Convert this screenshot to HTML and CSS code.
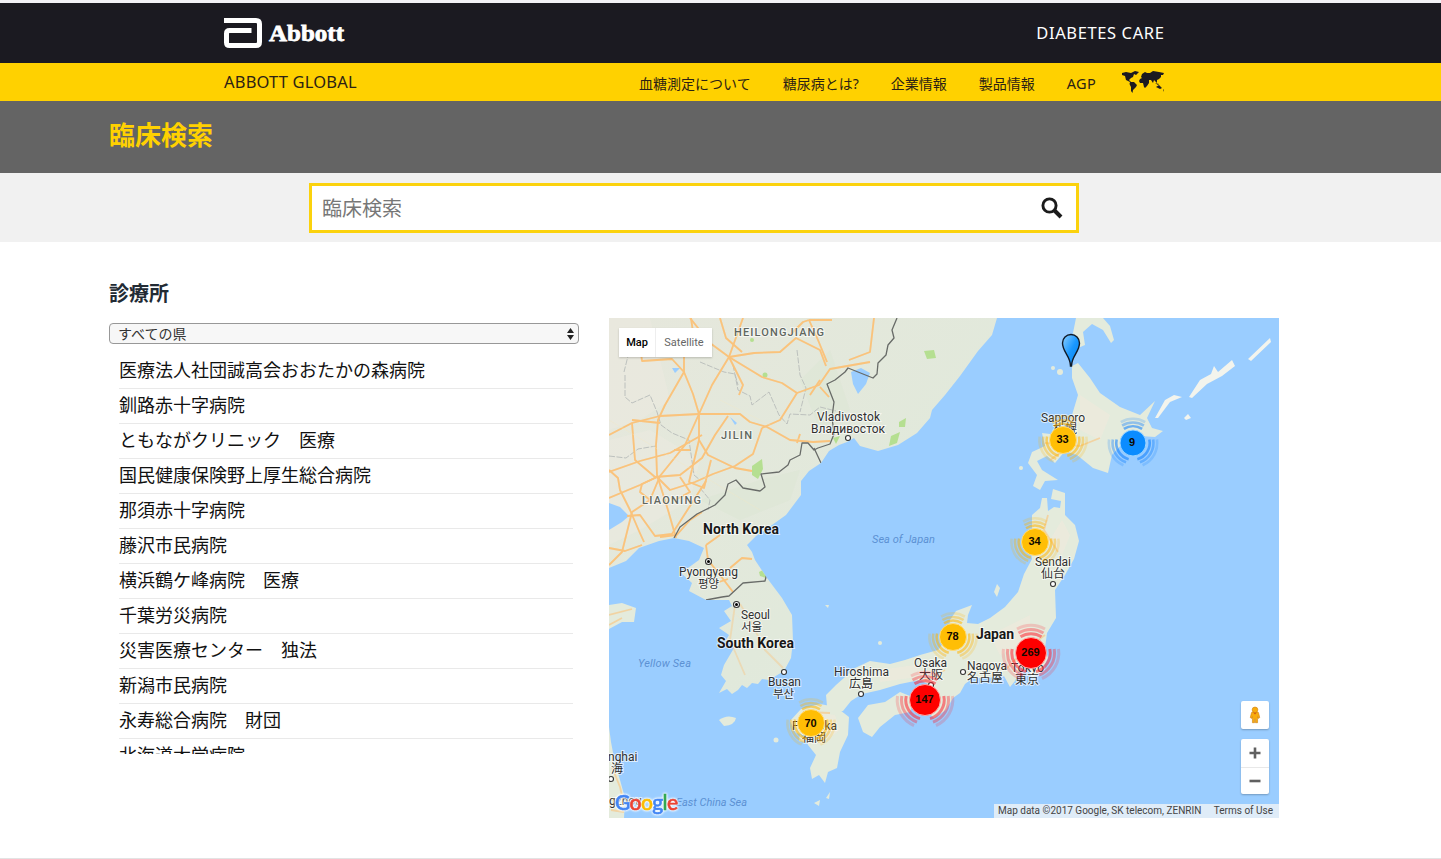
FILE: index.html
```html
<!DOCTYPE html>
<html lang="ja">
<head>
<meta charset="utf-8">
<title>臨床検索</title>
<link rel="stylesheet" href="styles.css">
</head>
<body>
<header class="topbar">
  <div class="narrow">
    <a class="logo" aria-label="Abbott">
      <svg class="logo-mark" width="38" height="30" viewBox="0 0 38 30"><path d="M0 2.500H32Q35.500 2.500 35.500 6V24Q35.500 27.500 32 27.500H5.500Q2.500 27.500 2.500 24.500V15.500Q2.500 12.500 5.500 12.500H27.500" fill="none" stroke="#fff" stroke-width="5"/></svg>
      <svg width="78" height="26" viewBox="0 0 78 26"><text class="logo-word" x="1" y="21" textLength="75" lengthAdjust="spacingAndGlyphs">Abbott</text></svg>
    </a>
    <span class="division">DIABETES CARE</span>
  </div>
</header>
<nav class="yellowbar">
  <div class="narrow">
    <a class="global">ABBOTT GLOBAL</a>
    <div class="menu">
      <a>血糖測定について</a><a>糖尿病とは?</a><a>企業情報</a><a>製品情報</a><a class="agp">AGP</a>
      <svg class="world" width="42" height="22" viewBox="0 0 42 22" fill="#1c1a20"><path d="M0 2L4 1 9 2 13 0 17 1 14 4 12 3 11 6 9 7 7 9 9 11 12 11 15 14 14 16 11 19 10.500 22 9 20 9 16 7.500 13 8 11 4 9 3 5 0 4Z"/><path d="M20 3L23 1 25 2 28 2 31 0 37 1 42 2 41 4 39 4 39 6 37 8 35 9 35 12 32 9 31 12 29 9 27 9 27 12 25 15 23 17 22 16 21 12 18 12 17 10 18 8 20 7 19 6Z"/><path d="M34 16L37 14 40 17 38 18ZM33 12L37 13 36 14ZM41 19L42 18 41 21Z"/></svg>
    </div>
  </div>
</nav>
<div class="titlebar"><div class="wide"><h1>臨床検索</h1></div></div>
<div class="searchbar">
  <form class="search">
    <input type="text" placeholder="臨床検索" aria-label="臨床検索">
    <svg width="22" height="22" viewBox="0 0 22 22" fill="none" stroke="#1b1b1b"><circle cx="8.500" cy="8.500" r="6.600" stroke-width="2.900"/><path d="M13 13L20 20" stroke-width="4"/></svg>
  </form>
</div>
<main class="content">
  <section class="clinics">
    <h2>診療所</h2>
    <div class="select"><span>すべての県</span><svg width="7" height="12" viewBox="0 0 7 12" fill="#222"><path d="M0 5L3.500 0 7 5ZM0 7H7L3.500 12Z"/></svg></div>
    <ul class="list">
      <li>医療法人社団誠高会おおたかの森病院</li>
      <li>釧路赤十字病院</li>
      <li>ともながクリニック　医療</li>
      <li>国民健康保険野上厚生総合病院</li>
      <li>那須赤十字病院</li>
      <li>藤沢市民病院</li>
      <li>横浜鶴ケ峰病院　医療</li>
      <li>千葉労災病院</li>
      <li>災害医療センター　独法</li>
      <li>新潟市民病院</li>
      <li>永寿総合病院　財団</li>
      <li>北海道大学病院</li>
    </ul>
  </section>
  <section class="map">
    <svg class="canvas" width="670" height="500" viewBox="609 318 670 500">
      <defs>
        <clipPath id="mainland"><path d="M609 318H997L992 335 978 351 960 376 945 395 932 410 930 418 917 433 898 445 878 451 860 446 854 438 847 442 839 445 829 451 821 463 809 471 801 481 801 495 786 515 772 525 756 536 747 545 752 552 755 560 767 578 782 598 792 615 793 641 791 658 784 671 769 680 762 679 758 684 752 683 747 688 742 685 738 690 732 694 727 689 719 693 726 681 721 675 724 665 734 648 726 640 729 635 719 628 731 621 724 611 732 606 729 600 706 600 689 591 692 583 681 573 699 560 704 548 689 541 674 538 659 541 639 548 626 561 609 568Z"/></clipPath>
        <linearGradient id="pin" x1="0" y1="0" x2="1" y2="1"><stop offset="0" stop-color="#8fd0ff"/><stop offset=".5" stop-color="#1a98ff"/><stop offset="1" stop-color="#0080f0"/></linearGradient>
        <linearGradient id="terrain" x1="0" y1="0" x2="1" y2="1"><stop offset="0" stop-color="#e6e7dc"/><stop offset=".6" stop-color="#e1e9db"/><stop offset="1" stop-color="#e5eade"/></linearGradient>
        <g id="rings" fill="none" stroke-width="3">
          <g stroke-opacity=".55"><path d="M-10.500 -16.200A19.300 19.300 0 0 1 10.500 -16.200"/><path d="M18.800 -4A19.300 19.300 0 0 1 5 18.600"/><path d="M-18.800 -4A19.300 19.300 0 0 0 -5 18.600"/></g>
          <g stroke-opacity=".38"><path d="M-12.500 -20A23.600 23.600 0 0 1 12.500 -20"/><path d="M23.200 -4A23.600 23.600 0 0 1 8 22.200"/><path d="M-23.200 -4A23.600 23.600 0 0 0 -8 22.200"/></g>
          <g stroke-opacity=".2"><path d="M-14 -24A27.800 27.800 0 0 1 14 -24"/><path d="M27.500 -4A27.800 27.800 0 0 1 11 25.500"/><path d="M-27.500 -4A27.800 27.800 0 0 0 -11 25.500"/></g>
        </g>
      </defs>
      <rect x="609" y="318" width="670" height="500" fill="#9acdff"/>

      <!-- mainland with roads, parks and lakes -->
      <g clip-path="url(#mainland)">
        <rect x="609" y="318" width="400" height="400" fill="url(#terrain)"/>
        <path d="M609 440L650 430 700 460 690 500 640 530 609 545ZM609 318H650L670 400 640 420 609 430Z" fill="#ebe9df" opacity=".6"/>
        <path d="M700 500L760 480 800 470 790 500 740 520ZM830 350L850 410 820 430 800 380Z" fill="#dce6d4" opacity=".5"/>
        <g fill="#b5df91"><path d="M752 466L762 459 763 469 758 479 752 475Z"/><path d="M924 351L934 350 936 358 927 359Z"/><path d="M899 422L906 418 905 427 899 427ZM891 436L900 432 897 443 889 446Z"/><circle cx="765" cy="375" r="2.500"/><circle cx="752" cy="340" r="2"/><path d="M759 572L765 569 766 578 760 576Z"/><path d="M833 438L840 436 836 444Z"/></g>
        <g fill="#9acdff"><path d="M609 503L620 507 629 516 622 522 609 530Z"/><path d="M851 372L861 368 870 373 866 384 858 394 853 384Z"/><path d="M672 368L680 368 675 373ZM730 417L737 423 735 425Z"/></g>
        <g class="province"><path d="M625 375V397L632 403 650 395 657 412 661 425 672 433 689 440 694 475 700 480"/><path d="M733 365L738 390 750 396 752 405 769 392 779 415 787 424 790 414 810 415 820 407 836 411"/><path d="M624 345L628 356 624 372M609 456L626 458 638 449 656 446M700 362L724 372 735 374 738 385M797 350L800 375 806 388 800 412M700 488L710 500 708 510"/></g>
        <g class="road-halo"><use href="#roads"/></g>
        <g id="roads" class="roads">
          <path d="M690 318L710 343 729 357 754 353 780 352 796 338 820 350 826 366"/>
          <path d="M743 318L729 357 712 385 699 414 685 445 660 476 650 500 632 512 622 552 609 565"/>
          <path d="M729 357L762 377 782 383 797 393 819 385 830 369 870 362"/>
          <path d="M729 357L743 385 739 395M640 345L642 361 672 359 684 372 693 394 699 414 699 440 708 455 735 468 752 471"/>
          <path d="M609 435L632 423 660 416 699 414 740 414 750 422 767 427 790 440 813 442 830 441"/>
          <path d="M762 428L780 420 797 393"/>
          <path d="M684 372L665 405 658 420 656 445 657 475 668 510 676 538"/>
          <path d="M632 423L635 460 655 477 680 475 702 458 715 435 728 416"/>
          <path d="M609 472L640 461 670 453 702 435M609 498L640 485 657 477 670 490 695 482 713 474 735 466 753 454 762 428"/>
          <path d="M632 420L660 423M699 440L689 482 704 488 711 460M674 450H690M680 477L690 492 675 500"/>
          <path d="M657 477L642 484 640 492 650 500M627 516L640 515 655 536 672 534 690 506 706 481"/>
          <path d="M609 470L618 478 620 490 630 510 639 531 644 542M609 548L625 551 642 545M660 537L676 535"/>
          <path d="M691 318L693 332 684 355 684 372M720 318L726 338 742 352M809 320H832M809 320L818 340 827 362M874 318L870 352 849 360"/>
          <path d="M790 335L803 322 809 320"/>
          <path d="M675 537L690 520 702 512M706 545L708 560 720 575 733 592M706 545L720 535M730 568L742 558 752 559M719 582L728 579"/>
          <path d="M797 443L800 434M820 387L829 397M820 380L810 395"/>
        </g>
        <path d="M609 420L760 510M720 400L800 440M730 610L780 650M740 640L770 610" stroke="#f4e7c4" fill="none" opacity=".35"/>
        <g class="border"><path d="M674 538L680 527 697 514 715 505 725 495 728 484 736 480 743 488 760 491 765 487 761 474 779 472 788 465 790 460 800 455 802 443 808 443 814 450 818 448 830 444 834 434 832 417 834 402 827 384 835 380 845 372 848 368 873 378 877 374 878 363 886 355 888 345 894 338 892 330 897 318"/><path d="M814 448L821 463M706 600L722 597 729 596 743 583 765 581 767 573"/></g>
      </g>

      <!-- other coasts -->
      <g fill="#e4ebdc">
        <path d="M609 605L622 603 636 608 634 622 622 622 609 629Z"/>
        <path d="M609 727L611 742 615 763 620 780 625 798 624 818H609Z"/>
        <path d="M719 720Q727 714 736 718Q735 725 724 726Z"/>
        <path d="M1072 366L1078 363 1090 378 1100 393 1120 407 1140 415 1155 401 1147 418 1152 428 1163 431 1155 437 1140 436 1125 441 1112 455 1108 473 1093 468 1077 455 1065 451 1055 463 1047 456 1037 461 1042 470 1058 480 1045 481 1040 490 1033 486 1037 475 1028 463 1032 452 1045 446 1042 433 1058 435 1067 428 1072 415 1078 395 1072 378Z"/>
        <path d="M1042 498L1047 498 1048 511 1054 507 1060 508 1061 501 1051 499 1053 489 1065 493 1065 515 1075 525 1079 541 1074 559 1065 575 1055 590 1056 618 1047 633 1045 648 1048 658 1041 672 1032 678 1028 668 1020 667 1015 681 1010 687 1004 676 986 678 973 678 965 684 960 693 953 698 946 710 934 718 923 708 930 685 920 680 900 684 880 690 862 694 851 701 843 711 835 712 827 706 826 695 836 685 845 677 855 668 870 661 890 664 905 660 920 655 938 650 948 637 950 620 956 611 972 605 968 615 967 623 978 624 990 618 1005 607 1018 592 1024 574 1032 559 1030 545 1032 531 1032 515 1040 508Z"/>
        <path d="M858 718L868 705 885 702 900 692 915 698 910 712 895 715 880 727 872 737 863 732Z"/>
        <path d="M801 709L820 704 836 707 849 717 848 735 840 752 837 768 828 772 825 783 819 775 812 779 810 768 816 755 808 745 805 735 796 733 790 721Z"/>
        <path d="M1076 318L1073 333 1078 348 1085 345 1083 332 1092 324 1103 330 1111 343 1114 340 1110 326 1103 318Z"/>
        <path d="M994 592L997 584 1000 588 997 597Z"/><circle cx="1053" cy="368" r="2"/><circle cx="1060" cy="372" r="3"/><circle cx="1021" cy="468" r="2"/><circle cx="776" cy="740" r="2.500"/><circle cx="880" cy="643" r="2"/><path d="M814 803L820 800 819 806ZM826 798L830 792 829 799ZM800 734L805 742 799 741ZM825 605L829 605 828 608Z"/>
        <path d="M1155 418L1165 400 1174 395 1182 397 1170 402 1158 418ZM1189 397L1200 380 1211 374 1214 366 1218 372 1232 360 1235 366 1222 376 1207 384 1192 398ZM1248 359L1270 338 1271 342 1251 361ZM1184 418L1188 414 1191 418 1186 420Z" fill="#f3f4ed"/>
      </g>
      <g fill="#eee9dc" opacity=".75"><path d="M1080 395L1110 415 1100 440 1080 430ZM1062 520L1070 535 1062 555 1050 540ZM990 635L1030 615 1030 640 1000 655ZM880 670L915 665 925 676 880 682ZM812 712L835 715 840 730 820 745Z"/></g>
      <g class="roads" stroke-opacity=".4"><path d="M740 604L750 620 765 650 783 668M735 605L730 640 745 675"/></g>
      <g class="roads" stroke-opacity=".6"><path d="M609 615L632 609M609 625L622 618M612 767L620 787 623 800M609 800L625 798M611 810L624 812M1045 443L1080 446 1100 438M1063 451L1050 460M1048 515L1044 530 1058 552M1045 635L1025 650 1005 670M945 670L925 680M803 712L830 713"/></g>

      <!-- place labels -->
      <g class="region">
        <text x="734" y="336" textLength="90">HEILONGJIANG</text><text x="721" y="439" textLength="31">JILIN</text><text x="642" y="504" textLength="59">LIAONING</text>
      </g>
      <g class="country"><text x="703" y="534" textLength="76">North Korea</text><text x="717" y="648" textLength="77">South Korea</text><text x="976" y="639" textLength="38">Japan</text></g>
      <g class="sea"><text x="872" y="543" textLength="63">Sea of Japan</text><text x="638" y="667" textLength="53">Yellow Sea</text><text x="676" y="806" textLength="71">East China Sea</text></g>
      <g class="dot"><circle cx="848" cy="438" r="2.500"/><circle cx="1053" cy="584" r="2.500"/><circle cx="784" cy="672" r="2.500"/><circle cx="861" cy="694" r="2.500"/><circle cx="963" cy="672" r="2.500"/><circle cx="931" cy="685" r="2.500"/><circle cx="611" cy="779" r="2.500"/><circle cx="708.500" cy="561.500" r="3"/><circle cx="736.500" cy="604.500" r="3"/></g>
      <circle cx="708.500" cy="561.500" r="1.500"/><circle cx="736.500" cy="604.500" r="1.500"/>
      <g class="city">
        <text x="817" y="421" textLength="63">Vladivostok</text><text x="811" y="433" textLength="74">Владивосток</text>
        <text x="1041" y="422" textLength="44">Sapporo</text><text x="1053" y="433">札幌</text>
        <text x="679" y="576" textLength="59">Pyongyang</text><text class="hangul" x="698" y="588">평양</text>
        <text x="741" y="619" textLength="29">Seoul</text><text class="hangul" x="741" y="631">서울</text>
        <text x="768" y="686" textLength="33">Busan</text><text class="hangul" x="773" y="698">부산</text>
        <text x="1035" y="566" textLength="36">Sendai</text><text x="1041" y="578" textLength="24">仙台</text>
        <text x="914" y="667" textLength="33">Osaka</text><text x="919" y="679" textLength="24">大阪</text>
        <text x="967" y="670" textLength="40">Nagoya</text><text x="967" y="682" textLength="36">名古屋</text>
        <text x="1011" y="672" textLength="33">Tokyo</text><text x="1015" y="684" textLength="24">東京</text>
        <text x="834" y="676" textLength="55">Hiroshima</text><text x="849" y="688" textLength="24">広島</text>
        <text x="792" y="730" textLength="45">Fukuoka</text><text x="802" y="742" textLength="24">福岡</text>
        <text x="608" y="761">nghai</text><text x="611" y="773">海</text><text x="609" y="805">gzhou</text>
      </g>

      <!-- marker clusters -->
      <g stroke="#ffb400"><use href="#rings" transform="translate(1063 440) scale(.85)"/><use href="#rings" transform="translate(1035 542) scale(.85)"/><use href="#rings" transform="translate(953 637) scale(.85)"/><use href="#rings" transform="translate(811 723) scale(.85)"/></g>
      <g fill="#ffbe05" stroke="#ffdc7c"><circle cx="1063" cy="440" r="13.500"/><circle cx="1035" cy="542" r="13.500"/><circle cx="953" cy="637" r="13.500"/><circle cx="811" cy="723" r="13.500"/></g>
      <use href="#rings" stroke="#087cff" transform="translate(1133 443) scale(.87)"/><circle cx="1133" cy="443" r="13" fill="#0b8cff" stroke="#9cd4ff"/>
      <g stroke="#ff2330"><use href="#rings" transform="translate(1031 653)"/><use href="#rings" transform="translate(925 700)"/></g>
      <g fill="#fe0000" stroke="#ffaca9"><circle cx="1031" cy="653" r="15.500"/><circle cx="925" cy="700" r="15.500"/></g>
      <g class="count"><text x="1062.500" y="443">33</text><text x="1034.500" y="545">34</text><text x="952.500" y="640">78</text><text x="810.500" y="727">70</text><text x="1132" y="446">9</text><text x="1030.500" y="656">269</text><text x="924.500" y="703">147</text></g>
      <path d="M1070.500 366C1070.500 356 1062.500 352 1062.500 343A8.500 8.500 0 0 1 1079.500 343C1079.500 352 1071.500 356 1071.500 366Z" fill="url(#pin)" stroke="#111b28" stroke-width="1.400"/>
      <g class="google-halo"><text class="google" x="615" y="810" textLength="63"><tspan class="g-blue">G</tspan><tspan class="g-red">o</tspan><tspan class="g-yellow">o</tspan><tspan class="g-blue">g</tspan><tspan class="g-green">l</tspan><tspan class="g-red">e</tspan></text></g>
    </svg>
    <div class="maptype"><b>Map</b><span>Satellite</span></div>
    <div class="controls">
      <div class="control"><svg width="12" height="20" viewBox="0 0 14 20" fill="#f8ac0c" stroke="#cf7f10" stroke-width=".7"><path d="M3 7Q7 5 11 7L12.500 13 11 14 10 12V19H7.500V15H6.500V19H4V12L3 14 1.500 13Z"/><circle cx="7" cy="4" r="3.300"/><path d="M5 7.500H9L7 9.500Z" fill="#d55b13" stroke="none"/></svg></div>
      <div class="zoom">
        <div><svg width="12" height="12" viewBox="0 0 12 12"><path d="M6 .5V11.500M.5 6H11.500" stroke="#606060" stroke-width="2.600"/></svg></div>
        <div><svg width="12" height="12" viewBox="0 0 12 12"><path d="M.5 6H11.500" stroke="#606060" stroke-width="2.600"/></svg></div>
      </div>
    </div>
    <div class="credits"><span>Map data ©2017 Google, SK telecom, ZENRIN</span><span>Terms of Use</span></div>
  </section>
</main>
</body>
</html>
```
FILE: styles.css
```css
* { box-sizing: border-box; }
body {
  margin: 0;
  height: 859px;
  display: flex;
  flex-direction: column;
  overflow: hidden;
  border-top: 3px solid #f2f2f6;
  border-bottom: 1px solid #e3e3e3;
  background: #fff;
  color: #111;
  font-family: "Noto Sans", "Noto Sans CJK JP", sans-serif;
}
.topbar, .yellowbar, .titlebar, .searchbar {
  flex: none;
  display: flex;
  justify-content: center;
  padding-right: 53px;
}
.narrow { width: 940px; display: flex; justify-content: space-between; }
.wide { width: 1170px; }

.topbar { height: 60px; background: #1b1a21; color: #fff; }
.topbar .narrow { align-items: center; }
.logo { display: flex; align-items: center; gap: 6px; }
.logo-word { fill: #fff; stroke: #fff; stroke-width: .8px; font: bold 24px "Liberation Serif", serif; }
.division { padding-bottom: 2px; font-size: 16.500px; letter-spacing: .62px; margin-right: -.5px; }

.yellowbar { height: 38px; background: #ffd100; color: #2c2214; }
.global { font-size: 16.500px; line-height: 38px; letter-spacing: .18px; }
.menu { display: flex; font-size: 14px; line-height: 41px; white-space: nowrap; }
.menu a { margin-right: 32px; }
.menu .agp { margin-right: 26px; font-size: 14.500px; letter-spacing: .3px; }
.world { margin-top: 8px; }

.titlebar { height: 72px; background: #646464; }
h1 { margin: 0; color: #ffd100; font-size: 26px; line-height: 68px; }

.searchbar { height: 69px; padding-top: 10px; background: #f1f1f1; }
.search {
  width: 770px;
  height: 50px;
  display: flex;
  align-items: center;
  padding: 0 13px 0 10px;
  border: 3px solid #fbd20d;
  background: #fff;
}
.search input {
  flex: 1;
  height: 40px;
  padding: 0 0 1px;
  border: 0;
  outline: 0;
  background: none;
  font: 20px "Noto Sans CJK JP", sans-serif;
}
.search input::placeholder { color: #777; }

.content { display: flex; gap: 30px; width: 1170px; margin-left: 109px; }
.clinics { width: 470px; padding-top: 37px; }
h2 { margin: 0 0 14px; color: #222b34; font-size: 20px; line-height: 30px; }
.select {
  height: 21px;
  display: flex;
  align-items: center;
  justify-content: space-between;
  padding: 0 4px 0 8px;
  border: 1px solid #989898;
  border-radius: 4px;
  background: #f7f7f7;
  color: #333;
  font: 14px/21px "Noto Sans CJK JP", sans-serif;
}
.list {
  height: 400px;
  margin: 10px 6px 0 10px;
  padding: 0;
  overflow: hidden;
  list-style: none;
  font: 18px/30px "Noto Sans CJK JP", sans-serif;
}
.list li { height: 35px; border-bottom: 1px solid #e9e9e9; }

.map { position: relative; width: 670px; height: 500px; margin-top: 76px; overflow: hidden; font-family: Roboto, sans-serif; }
.canvas { display: block; }
.roads { fill: none; stroke: #fac37c; stroke-width: 1.8px; stroke-linejoin: round; }
.road-halo { opacity: .25; }
.province { fill: none; stroke: #bcc0bd; stroke-dasharray: 6 1.5; }
.border { fill: none; stroke: #686b68; stroke-width: 1.3px; stroke-linejoin: round; }
.region, .country, .sea, .city { paint-order: stroke; stroke: #fff; stroke-opacity: .65; stroke-width: 2px; }
.region { fill: #606660; font: 500 11px Roboto, sans-serif; }
.country { fill: #181818; font: bold 14px Roboto, sans-serif; }
.sea { fill: #5c91d3; stroke: none; font: italic 11px Roboto, sans-serif; }
.city { fill: #303030; font: 12px Roboto, "Noto Sans CJK JP", "Noto Sans CJK KR", sans-serif; }
.hangul { font: 11.500px "Noto Sans CJK KR", sans-serif; }
.dot { fill: #fff; stroke: #333; stroke-width: 1.1px; }
.count { fill: #110900; text-anchor: middle; font: bold 11px "Liberation Sans", sans-serif; }
.google { font: 500 21px Lato, sans-serif; stroke-width: .6px; }
.google-halo { filter: drop-shadow(0 0 1px #fff) drop-shadow(0 0 1px #fff); }
.g-blue { fill: #4285f4; stroke: #4285f4; }
.g-red { fill: #ea4335; stroke: #ea4335; }
.g-yellow { fill: #fbbc05; stroke: #fbbc05; }
.g-green { fill: #34a853; stroke: #34a853; }
.maptype {
  position: absolute;
  left: 10px;
  top: 10px;
  display: flex;
  background: #fff;
  box-shadow: 0 1px 2px rgba(0, 0, 0, .2);
  font-size: 11px;
  line-height: 29px;
}
.maptype b { width: 37px; text-align: center; border-right: 1px solid #eee; color: #000; font-weight: 500; }
.maptype span { width: 56px; text-align: center; color: #666; }
.controls { position: absolute; right: 10px; bottom: 24px; display: grid; gap: 10px; }
.control, .zoom { width: 28px; border-radius: 2px; background: #fff; box-shadow: 0 1px 2px rgba(0, 0, 0, .25); }
.control, .zoom div { height: 28px; display: flex; align-items: center; justify-content: center; }
.zoom div + div { height: 27px; border-top: 1px solid #e8e8e8; }
.credits {
  position: absolute;
  right: 0;
  bottom: 0;
  width: 285px;
  display: flex;
  justify-content: space-between;
  padding: 0 6px 0 4px;
  background: rgba(245, 245, 245, .75);
  color: #444;
  font-size: 10px;
  line-height: 14px;
  white-space: nowrap;
}
```
